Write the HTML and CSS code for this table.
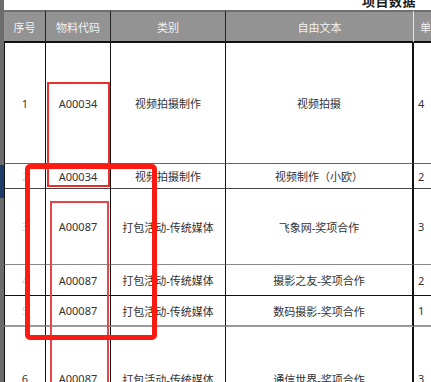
FILE: index.html
```html
<!DOCTYPE html>
<html lang="zh">
<head>
<meta charset="utf-8">
<link rel="stylesheet" href="styles.css">
</head>
<body>
<div class="page">
  <div class="strip"><div class="strip-blue"></div></div>
  <div class="sheet">
    <div class="title"><span class="title-text">项目数据</span></div>
    <table class="grid">
      <colgroup>
        <col class="c1"><col class="c2"><col class="c3"><col class="c4"><col class="c5">
      </colgroup>
      <thead>
        <tr class="head">
          <th>序号</th><th>物料代码</th><th>类别</th><th class="last-sep">自由文本</th><th class="clip">单价</th>
        </tr>
      </thead>
      <tbody>
        <tr class="r1"><td>1</td><td>A00034</td><td>视频拍摄制作</td><td>视频拍摄</td><td class="clip">4</td></tr>
        <tr class="r2"><td class="faint">2</td><td>A00034</td><td>视频拍摄制作</td><td>视频制作（小欧）</td><td class="clip">2</td></tr>
        <tr class="r3"><td class="faint">3</td><td>A00087</td><td>打包活动-传统媒体</td><td>飞象网-奖项合作</td><td class="clip">3</td></tr>
        <tr class="r4"><td class="faint">4</td><td>A00087</td><td>打包活动-传统媒体</td><td>摄影之友-奖项合作</td><td class="clip">2</td></tr>
        <tr class="r5"><td class="faint">5</td><td>A00087</td><td>打包活动-传统媒体</td><td>数码摄影-奖项合作</td><td class="clip">1</td></tr>
        <tr class="r6"><td>6</td><td>A00087</td><td>打包活动-传统媒体</td><td>通信世界-奖项合作</td><td class="clip">3</td></tr>
      </tbody>
    </table>
  </div>
  <div class="mark mark-a"></div>
  <div class="mark mark-b"></div>
  <div class="mark mark-c"></div>
</div>
</body>
</html>
```

FILE: styles.css
```css
html, body {
  margin: 0;
  padding: 0;
  background: #ffffff;
  overflow: hidden;
}
body {
  width: 431px;
  height: 382px;
  font-family: "Noto Sans", "Noto Sans CJK SC", sans-serif;
}
.page {
  position: relative;
  display: flex;
  width: 431px;
  height: 382px;
  overflow: hidden;
}
.strip {
  flex: 0 0 4px;
  background: #6c6c6c;
  display: flex;
  flex-direction: column;
  padding-top: 165px;
}
.strip-blue {
  flex-shrink: 0;
  height: 33px;
  background: #1f3b68;
}
.sheet {
  flex: 0 0 auto;
  display: flex;
  flex-direction: column;
}
.title {
  flex: 0 0 10px;
  height: 10px;
  padding-left: 358px;
  overflow: hidden;
}
.title-text {
  display: block;
  margin-top: -8px;
  font-family: "Noto Sans CJK SC", sans-serif;
  font-weight: bold;
  font-size: 13px;
  line-height: 17px;
  color: #1a1a1a;
  letter-spacing: 0.5px;
}
.grid {
  flex-shrink: 0;
  border-collapse: separate;
  border-spacing: 0;
  table-layout: fixed;
  width: 474px;
  font-size: 11px;
  color: #333;
}
.c1 { width: 42px; }
.c2 { width: 65px; }
.c3 { width: 115px; }
.c4 { width: 188px; }
.c5 { width: 64px; }
.grid th, .grid td {
  padding: 0;
  text-align: center;
  vertical-align: middle;
  white-space: nowrap;
  overflow: hidden;
  box-sizing: border-box;
}
.head th {
  height: 33px;
  background: #939393;
  color: #f2f2f2;
  font-weight: normal;
  font-family: "Noto Sans CJK SC", sans-serif;
  font-size: 11px;
  border-top: 2px solid #6f6f6f;
  border-bottom: 2px solid #111;
  border-right: 1px solid #222;
}
.head th.last-sep {
  border-right: 1px solid #e6e6e6;
}
.head th.clip {
  text-align: left;
  padding-left: 6px;
  border-right: none;
}
.grid td {
  border-right: 1px solid #111;
  border-bottom: 1px solid #444;
}
.grid td:first-child {
  border-left: 1px solid #111;
}
.grid td:nth-child(4) {
  border-right: 2px solid #111;
}
.grid td.clip {
  text-align: left;
  padding-left: 4px;
  border-right: none;
}
.grid td.faint {
  color: #d4d4d4;
}
.r1 td { height: 121px; border-bottom-color: #666; }
.r2 td { height: 25px; }
.r3 td { height: 76px; border-bottom-color: #888; }
.r4 td { height: 31px; border-bottom-color: #111; }
.r5 td { height: 31px; border-bottom: 2px solid #999; }
.r6 td { height: 104px; }

.mark {
  position: absolute;
  box-sizing: border-box;
}
.mark-a {
  left: 47px;
  top: 82px;
  width: 63px;
  height: 105px;
  border: 2px solid #e8302f;
}
.mark-b {
  left: 50px;
  top: 201px;
  width: 59px;
  height: 220px;
  border: 2px solid #e4464a;
}
.mark-c {
  left: 25px;
  top: 164px;
  width: 132px;
  height: 176px;
  border: 5px solid #fb1b12;
  border-radius: 5px;
}
```
